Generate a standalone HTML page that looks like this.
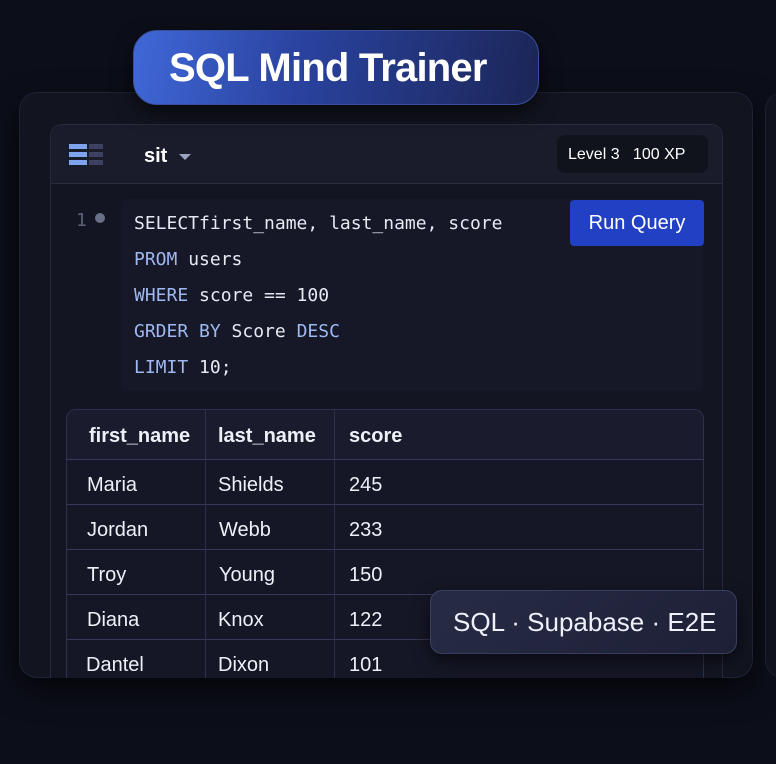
<!DOCTYPE html>
<html><head><style>
*{margin:0;padding:0;box-sizing:border-box}
body{width:776px;height:764px;background:#0c0e19;font-family:"Liberation Sans",sans-serif;position:relative;overflow:hidden;color:#e8ecf8}
.card{position:absolute;left:19px;top:92px;width:734px;height:586px;background:#121420;border:1px solid #1f2233;border-radius:18px;box-shadow:0 12px 30px rgba(0,0,0,.6)}
.card2{position:absolute;left:765px;top:92px;width:40px;height:586px;background:#10121d;border:1px solid #1c1f2e;border-radius:18px}
.panel{position:absolute;left:50px;top:124px;width:673px;height:554px;background:#131522;border:1px solid #262a3e;border-bottom:none;border-radius:12px 12px 0 0}
.hdr{position:absolute;left:0;top:0;right:0;height:59px;background:#1a1c2b;border-bottom:1px solid #2a2d40;border-radius:12px 12px 0 0}
.title{position:absolute;left:133px;top:30px;width:406px;height:75px;border-radius:24px;background:linear-gradient(100deg,#4068d8 0%,#2a43a0 40%,#1b2556 100%);border:1px solid #3a4f9a;box-shadow:0 8px 20px rgba(0,0,0,.6);color:#fff;font-weight:bold;font-size:40px;letter-spacing:-0.8px;line-height:75px;padding-left:35px}
.code{position:absolute;left:121px;top:199px;width:582px;height:192px;background:#161827;border-radius:6px;font-family:"DejaVu Sans Mono","Liberation Mono",monospace;font-size:18px;color:#e6e8f2}
.code div{position:absolute;left:13px}
.kw{color:#9fb8f0}
.btn{position:absolute;left:570px;top:200px;width:134px;height:46px;background:#2240c4;border-radius:4px;color:#fff;font-size:20px;text-align:center;line-height:46px}
.tbl{position:absolute;left:66px;top:409px;width:638px;height:269px;border:1px solid #2d3150;border-bottom:none;border-radius:10px 10px 0 0;overflow:hidden;background:#151726;font-size:20px;color:#eef0f8}
.row{position:absolute;left:0;right:0;border-top:1px solid #34385a;height:45px}
.c{position:absolute;top:3px;line-height:45px}
.vl{position:absolute;top:0;bottom:0;width:1px;background:#2d3150;z-index:2}
.badge{position:absolute;left:430px;top:590px;width:307px;height:64px;border-radius:12px;background:linear-gradient(135deg,#272b45,#1d2036);border:1px solid #3a3f60;box-shadow:0 6px 16px rgba(0,0,0,.6);font-size:26px;color:#eef0fa;line-height:62px;padding-left:22px}
</style></head><body>
<div class="card"></div><div class="card2"></div>
<div class="panel"><div class="hdr">
<svg style="position:absolute;left:18px;top:19px" width="36" height="22"><g fill="#7ea4f0"><rect x="0" y="0" width="18" height="5"/><rect x="0" y="8" width="18" height="5"/><rect x="0" y="16" width="18" height="5"/></g><g fill="#3c4260"><rect x="20" y="0" width="14" height="5"/><rect x="20" y="8" width="14" height="5"/><rect x="20" y="16" width="14" height="5"/></g></svg>
<div style="position:absolute;left:93px;top:20px;font-size:20px;font-weight:bold;color:#fff">sit</div>
<div style="position:absolute;left:128px;top:29px;width:0;height:0;border-left:6px solid transparent;border-right:6px solid transparent;border-top:6px solid #9aa3c0"></div>
<div style="position:absolute;left:506px;top:10px;width:151px;height:38px;background:#10121c;border-radius:8px;font-size:16px;color:#fff;line-height:40px;padding-left:11px">Level 3&nbsp;&nbsp;&nbsp;100 XP</div>
</div></div>
<div class="title">SQL Mind Trainer</div>
<div style="position:absolute;left:76px;top:210px;font-family:'DejaVu Sans Mono',monospace;font-size:18px;color:#5c6278">1</div>
<div style="position:absolute;left:95px;top:213px;width:10px;height:10px;border-radius:50%;background:#6a7088"></div>
<div class="code">
<div style="top:14px">SELECTfirst_name, last_name, score</div>
<div style="top:50px"><span class="kw">PROM</span> users</div>
<div style="top:86px"><span class="kw">WHERE</span> score == 100</div>
<div style="top:122px"><span class="kw">GRDER BY</span> Score <span class="kw">DESC</span></div>
<div style="top:158px"><span class="kw">LIMIT</span> 10;</div>
</div>
<div class="btn">Run Query</div>
<div class="tbl">
<div class="vl" style="left:138px"></div><div class="vl" style="left:267px"></div>
<div class="row" style="top:0;border-top:none;height:49px;background:#1a1c2e;font-weight:bold"><span class="c" style="left:22px;top:0;line-height:52px">first_name</span><span class="c" style="left:151px;top:0;line-height:52px">last_name</span><span class="c" style="left:282px;top:0;line-height:52px">score</span></div>
<div class="row" style="top:49px"><span class="c" style="left:20px">Maria</span><span class="c" style="left:151px">Shields</span><span class="c" style="left:282px">245</span></div>
<div class="row" style="top:94px"><span class="c" style="left:20px">Jordan</span><span class="c" style="left:152px">Webb</span><span class="c" style="left:282px">233</span></div>
<div class="row" style="top:139px"><span class="c" style="left:20px">Troy</span><span class="c" style="left:152px">Young</span><span class="c" style="left:282px">150</span></div>
<div class="row" style="top:184px"><span class="c" style="left:20px">Diana</span><span class="c" style="left:151px">Knox</span><span class="c" style="left:282px">122</span></div>
<div class="row" style="top:229px"><span class="c" style="left:19px">Dantel</span><span class="c" style="left:151px">Dixon</span><span class="c" style="left:282px">101</span></div>
</div>
<div class="badge">SQL · Supabase · E2E</div>
</body></html>
